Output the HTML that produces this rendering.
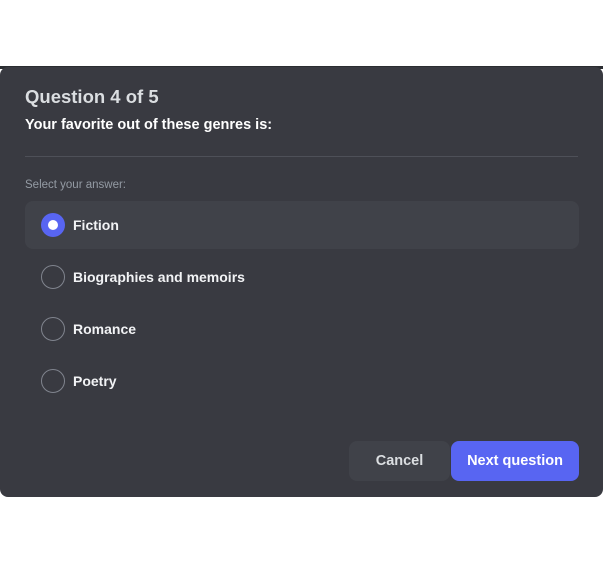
<!DOCTYPE html>
<html><head><style>
*{margin:0;padding:0;box-sizing:border-box}
body{width:603px;height:564px;background:#fff;position:relative;overflow:hidden;font-family:"Liberation Sans",sans-serif}
.m{position:absolute;left:0;top:67px;width:603px;height:430px;background:#393a41;border-radius:8px}
.t{position:absolute;left:25px;top:86px;font-size:18.5px;font-weight:bold;color:#dbdee1}
.s{position:absolute;left:25px;top:117px;font-size:14.5px;font-weight:bold;color:#fff}
.d{position:absolute;left:25px;top:156px;width:553px;height:1px;background:#4e5058}
.l{position:absolute;left:25px;top:179px;font-size:11.5px;color:#949ba4}
.o{position:absolute;left:25px;width:554px;height:48px;border-radius:8px}
.o.a{background:#404249}
.r{position:absolute;left:16px;top:12px;width:24px;height:24px;border-radius:50%;border:1.5px solid #80848e}
.a .r{background:#5865f2;border:none}
.a .r:after{content:"";position:absolute;left:7px;top:7px;width:10px;height:10px;border-radius:50%;background:#fff}
.o span{position:absolute;left:48px;top:16px;font-size:14px;font-weight:bold;color:#f2f3f5}
.b{position:absolute;top:441px;height:40px;border-radius:8px;color:#fff;font-size:14.5px;font-weight:bold;text-align:center;line-height:40px}
</style></head><body>
<div style="position:absolute;left:0;top:66px;width:603px;height:3px;background:#2b2d31"></div>
<div class="m"></div>
<div class="t">Question 4 of 5</div>
<div class="s">Your favorite out of these genres is:</div>
<div class="d"></div>
<div class="l">Select your answer:</div>
<div class="o a" style="top:201px"><div class="r"></div><span>Fiction</span></div>
<div class="o" style="top:253px"><div class="r"></div><span>Biographies and memoirs</span></div>
<div class="o" style="top:305px"><div class="r"></div><span>Romance</span></div>
<div class="o" style="top:357px"><div class="r"></div><span>Poetry</span></div>
<div class="b" style="left:349px;width:101px;background:#404249;color:#dbdee1">Cancel</div>
<div class="b" style="left:451px;width:128px;background:#5865f2">Next question</div>
</body></html>
